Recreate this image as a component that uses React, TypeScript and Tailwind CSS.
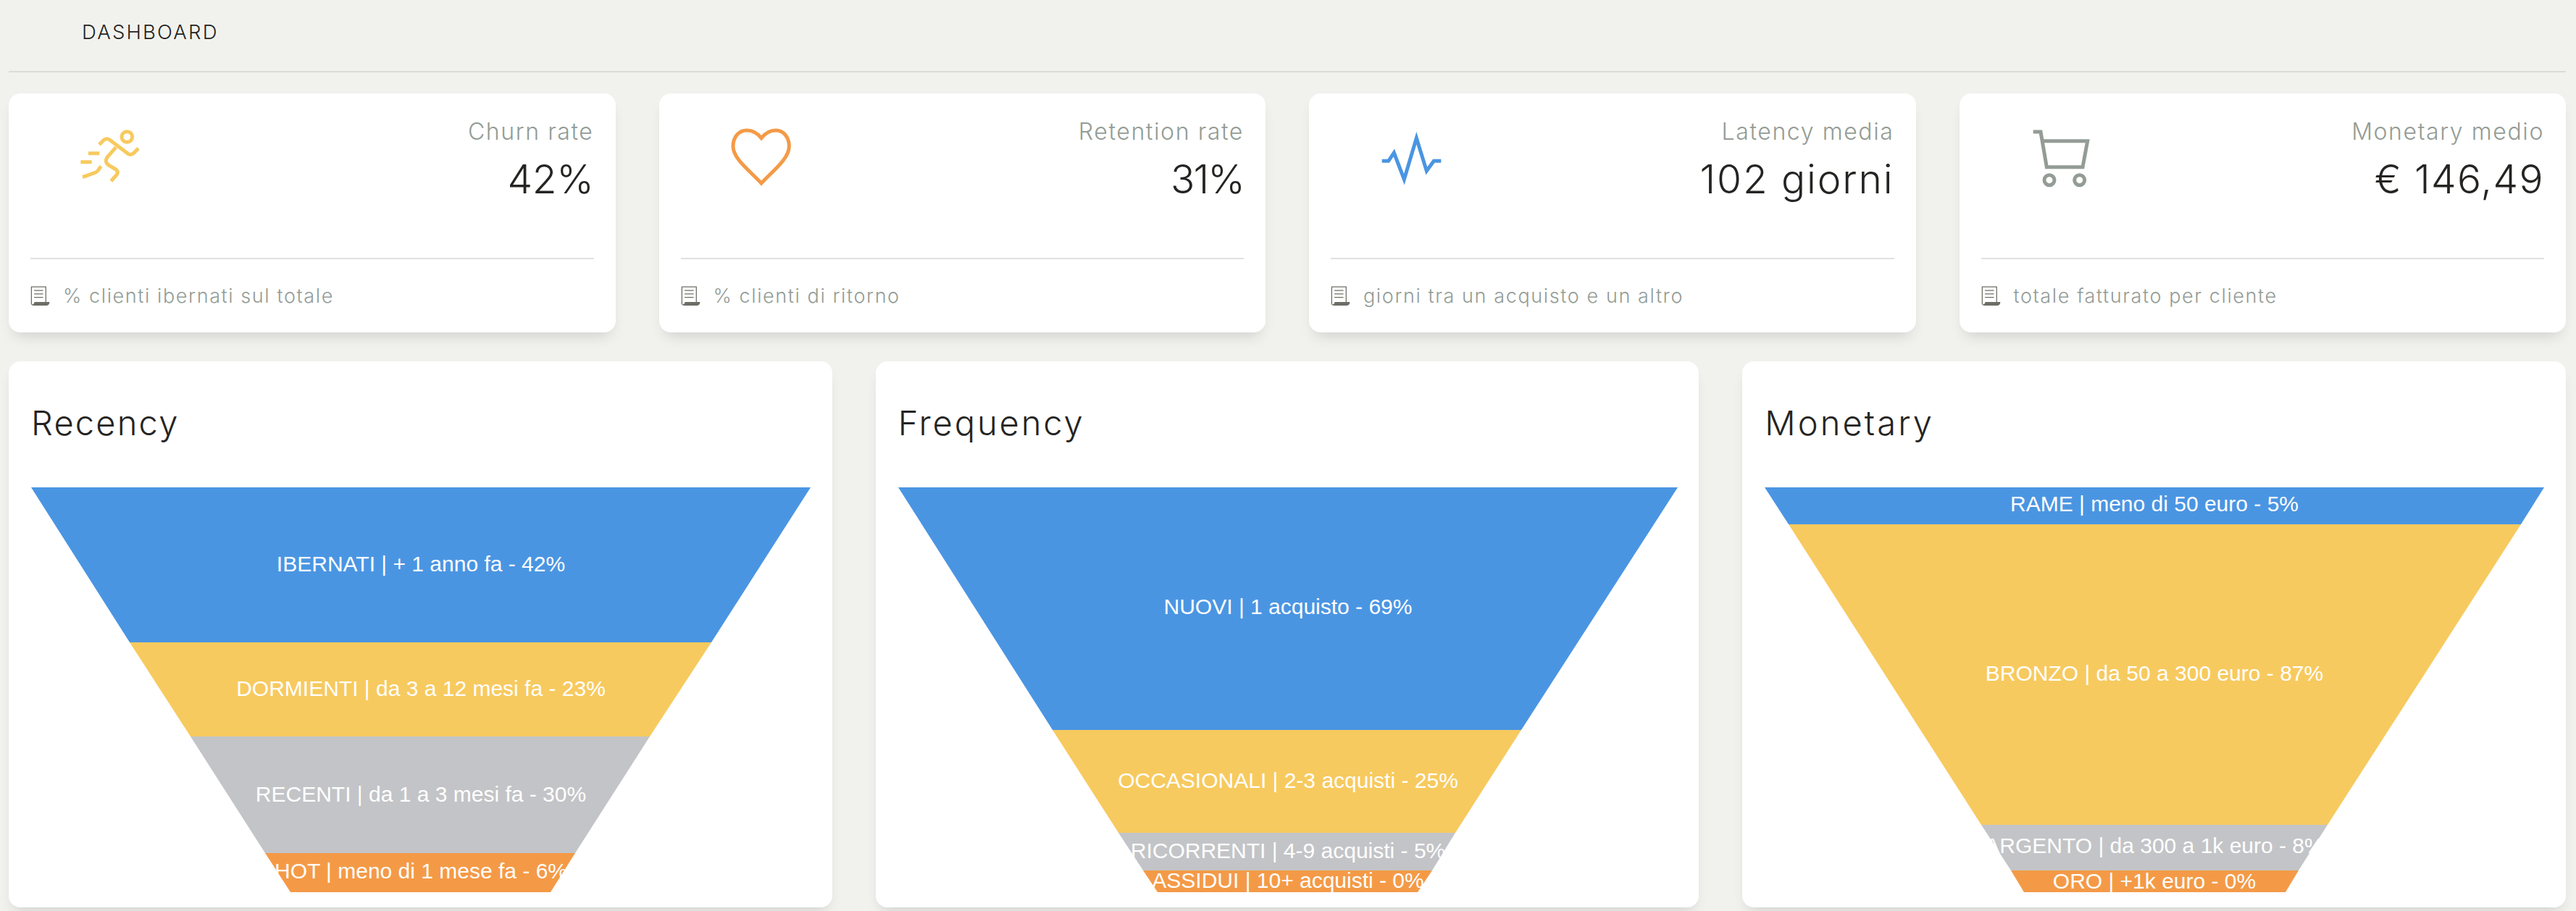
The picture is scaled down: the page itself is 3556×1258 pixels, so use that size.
import type { ReactNode } from "react";

const BLUE = "#4A95E2";
const YELLOW = "#F7CA5F";
const GRAY = "#C3C4C7";
const ORANGE = "#F49A47";

function RunnerIcon() {
  return (
    <svg width="120" height="110" viewBox="0 0 360 330" fill="none" className="shrink-0">
      <g transform="translate(-99 -60)" stroke={YELLOW} strokeWidth="15" strokeLinejoin="round">
        <circle cx="346" cy="147" r="22" />
        <path d="M231 179 L250 160 Q262 151 274 159 L350 217 Q362 224 373 215 L393 194" />
        <path d="M300 190 L266 229 Q250 250 270 264 L300 282 Q312 291 304 303 L280 330" />
        <path d="M238 268 L226 286 Q221 293 212 296 L162 314" />
        <path d="M186 215 H232 M154 251 H200" />
      </g>
    </svg>
  );
}

function HeartIcon() {
  return (
    <svg width="120" height="110" viewBox="0 0 360 330" fill="none" className="shrink-0">
      <path
        d="M180 92 C165 73 145 60 120 60 C85 60 63 90 63 125 C63 178 130 225 180 279 C230 225 295 178 295 125 C295 90 272 60 240 60 C215 60 195 73 180 92 Z"
        stroke={ORANGE}
        strokeWidth="15"
      />
    </svg>
  );
}

function PulseIcon() {
  return (
    <svg width="120" height="110" viewBox="0 0 360 330" fill="none" className="shrink-0">
      <g transform="translate(-21 -30)">
        <path d="M80 217 H107 L130 183 L172 293 L223 122 L265 258 L295 217 H325" stroke={BLUE} strokeWidth="15" />
      </g>
    </svg>
  );
}

function CartIcon() {
  return (
    <svg width="120" height="110" viewBox="0 0 360 330" fill="none" className="shrink-0">
      <g transform="translate(-18 0)" stroke="#939C95" strokeWidth="15">
        <path d="M80 66 H111 L136 212 H285 L305 104 H120" />
        <circle cx="147" cy="266" r="21" />
        <circle cx="272" cy="266" r="21" />
      </g>
    </svg>
  );
}

function ReceiptIcon() {
  return (
    <svg width="27" height="29" viewBox="70 58 80 86" fill="none" className="shrink-0">
      <g stroke="#6E6E67" strokeWidth="3.8">
        <path d="M74 135 V64 H133 V126" />
        <path d="M85 79 H122 M85 93 H122 M85 107 H122" />
        <path d="M76 138 Q86 138 88 128 H146 Q146 138 136 139 H82 Q76 139 74 134" fill="#6E6E67" />
      </g>
    </svg>
  );
}

type Stat = { icon: ReactNode; label: string; value: string; note: string; valueClass: string };

const stats: Stat[] = [
  { icon: <RunnerIcon />, label: "Churn rate", value: "42%", note: "% clienti ibernati sul totale", valueClass: "tracking-[-0.3px]" },
  { icon: <HeartIcon />, label: "Retention rate", value: "31%", note: "% clienti di ritorno", valueClass: "tracking-[-1.8px]" },
  { icon: <PulseIcon />, label: "Latency media", value: "102 giorni", note: "giorni tra un acquisto e un altro", valueClass: "tracking-[1.9px]" },
  { icon: <CartIcon />, label: "Monetary medio", value: "€ 146,49", note: "totale fatturato per cliente", valueClass: "tracking-[1.4px]" },
];

function StatCard({ icon, label, value, note, valueClass }: Stat) {
  return (
    <div className="h-[330px] rounded-[16px] bg-white px-[30px] pt-[31px] shadow-[0_12px_20px_-8px_rgba(0,0,0,0.15)]">
      <div className="box-content flex h-[196px] items-start justify-between border-b-2 border-[#E1E1DF]">
        <div className="ml-[51px]">{icon}</div>
        <div className="text-right">
          <div className="mt-[2px] text-[32px] leading-[40px] font-light tracking-[1.6px] text-[#939C95]">{label}</div>
          <div className={`mt-[12px] text-[55px] leading-[66px] font-light text-[#252422] ${valueClass}`}>{value}</div>
        </div>
      </div>
      <div className="flex items-center gap-[18px] pt-[32px]">
        <ReceiptIcon />
        <span className="relative top-[1px] text-[27px] leading-[36px] font-light tracking-[1.6px] text-[#939C95]">{note}</span>
      </div>
    </div>
  );
}

type Funnel = {
  title: string;
  titleClass: string;
  segs: { color: string; label: string; textY: number; y0: number; y1: number; l0: number; r0: number; l1: number; r1: number }[];
};

const funnels: Funnel[] = [
  {
    title: "Recency",
    titleClass: "tracking-[2.2px]",
    segs: [
      { color: BLUE, label: "IBERNATI | + 1 anno fa - 42%", textY: 105, y0: 0, y1: 214, l0: 0, r0: 1076, l1: 136, r1: 939 },
      { color: YELLOW, label: "DORMIENTI | da 3 a 12 mesi fa - 23%", textY: 277, y0: 214, y1: 344, l0: 136, r0: 939, l1: 220, r1: 854 },
      { color: GRAY, label: "RECENTI | da 1 a 3 mesi fa - 30%", textY: 423, y0: 344, y1: 505, l0: 220, r0: 854, l1: 323, r1: 751 },
      { color: ORANGE, label: "HOT | meno di 1 mese fa - 6%", textY: 529, y0: 505, y1: 559, l0: 323, r0: 751, l1: 358, r1: 717 },
    ],
  },
  {
    title: "Frequency",
    titleClass: "tracking-[2.9px]",
    segs: [
      { color: BLUE, label: "NUOVI | 1 acquisto - 69%", textY: 164, y0: 0, y1: 335, l0: 0, r0: 1076, l1: 213, r1: 860 },
      { color: YELLOW, label: "OCCASIONALI | 2-3 acquisti - 25%", textY: 404, y0: 335, y1: 477, l0: 213, r0: 860, l1: 304, r1: 769 },
      { color: GRAY, label: "RICORRENTI | 4-9 acquisti - 5%", textY: 501, y0: 477, y1: 529, l0: 304, r0: 769, l1: 338, r1: 737 },
      { color: ORANGE, label: "ASSIDUI | 10+ acquisti - 0%", textY: 542, y0: 529, y1: 559, l0: 338, r0: 737, l1: 358, r1: 717 },
    ],
  },
  {
    title: "Monetary",
    titleClass: "tracking-[3.1px]",
    segs: [
      { color: BLUE, label: "RAME | meno di 50 euro - 5%", textY: 22, y0: 0, y1: 51, l0: 0, r0: 1076, l1: 33, r1: 1044 },
      { color: YELLOW, label: "BRONZO | da 50 a 300 euro - 87%", textY: 256, y0: 51, y1: 466, l0: 33, r0: 1044, l1: 299, r1: 777 },
      { color: GRAY, label: "ARGENTO | da 300 a 1k euro - 8%", textY: 494, y0: 466, y1: 529, l0: 299, r0: 777, l1: 340, r1: 737 },
      { color: ORANGE, label: "ORO | +1k euro - 0%", textY: 543, y0: 529, y1: 559, l0: 340, r0: 737, l1: 358, r1: 719 },
    ],
  },
];

function FunnelCard({ title, titleClass, segs }: Funnel) {
  return (
    <div className="h-[754px] rounded-[16px] bg-white px-[31px] pt-[57px] shadow-[0_12px_20px_-8px_rgba(0,0,0,0.15)]">
      <h2 className={`text-[47px] leading-[56px] font-light text-[#252422] ${titleClass}`}>{title}</h2>
      <svg width="1076" height="559" viewBox="0 0 1076 559" className="mt-[61px] block">
        {segs.map((s) => (
          <polygon
            key={s.label}
            fill={s.color}
            points={`${s.l0},${s.y0} ${s.r0},${s.y0} ${s.r1},${s.y1} ${s.l1},${s.y1}`}
          />
        ))}
        {segs.map((s) => (
          <text
            key={s.label}
            x="538"
            y={s.textY + 11}
            textAnchor="middle"
            fill="#fff"
            fontSize="30"
            fontFamily="'Liberation Sans', Arial, sans-serif"
          >
            {s.label}
          </text>
        ))}
      </svg>
    </div>
  );
}

export default function App() {
  return (
    <div className="h-[1258px] w-[3556px] overflow-hidden bg-[#F1F2EE] pl-[12px] pr-[14px] font-['Inter',sans-serif]">
      <header className="flex h-[100px] items-start border-b-2 border-[#DCDCD8] pl-[101px] pt-[25px]">
        <span className="text-[27.5px] leading-[38px] font-light tracking-[2.2px] text-[#252422]">DASHBOARD</span>
      </header>
      <div className="mt-[29px] grid grid-cols-4 gap-[60px]">
        {stats.map((s) => (
          <StatCard key={s.label} {...s} />
        ))}
      </div>
      <div className="mt-[40px] grid grid-cols-3 gap-[60px]">
        {funnels.map((f) => (
          <FunnelCard key={f.title} {...f} />
        ))}
      </div>
    </div>
  );
}
